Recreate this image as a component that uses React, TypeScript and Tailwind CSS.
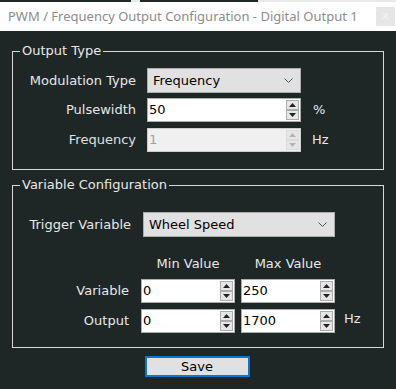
import React from "react";

const F = { fontFamily: '"DejaVu Sans", "Liberation Sans", sans-serif' };

function Chevron() {
  return (
    <svg width="9" height="6" viewBox="0 0 9 6" className="shrink-0">
      <path d="M0.5 0.5 L4.5 4.5 L8.5 0.5" fill="none" stroke="#555" strokeWidth="1" />
    </svg>
  );
}

function Combo({ value, w }: { value: string; w: string }) {
  return (
    <div
      className={`${w} h-[25px] bg-[#e1e1e1] border border-[#adadad] flex items-center justify-between pl-[5px] pr-[7px] text-[13px] text-black`}
    >
      <span>{value}</span>
      <Chevron />
    </div>
  );
}

function Spin({ disabled }: { disabled?: boolean }) {
  const c = disabled ? "#b5b5b5" : "#222";
  const bd = disabled ? "border-[#dcdcdc]" : "border-[#acacac]";
  return (
    <div className="flex flex-col w-[14px] h-full py-[1px] pr-[1px]">
      <div className={`flex-1 bg-[#e6e6e6] border ${bd} flex items-center justify-center`}>
        <svg width="7" height="4" viewBox="0 0 7 4"><path d="M0 4 L3.5 0 L7 4Z" fill={c} /></svg>
      </div>
      <div className={`flex-1 bg-[#e6e6e6] border ${bd} flex items-center justify-center`}>
        <svg width="7" height="4" viewBox="0 0 7 4"><path d="M0 0 L3.5 4 L7 0Z" fill={c} /></svg>
      </div>
    </div>
  );
}

function Num({ value, w, disabled }: { value: string; w: string; disabled?: boolean }) {
  return (
    <div
      className={`${w} h-[24px] border flex items-stretch justify-between ${
        disabled ? "bg-[#f0f0f0] border-[#cccccc] text-[#a0a0a0]" : "bg-white border-[#adadad] text-black"
      } text-[13px]`}
    >
      <span className="pl-[1px] leading-[22px]">{value}</span>
      <Spin disabled={disabled} />
    </div>
  );
}

export default function App() {
  return (
    <div className="w-[396px] h-[389px] bg-[#1e2626] flex flex-col" style={F}>
      <div className="h-[2px] flex">
        <div className="w-[131px] bg-[#1e2626]" />
        <div className="w-[9px] bg-[#e8e8e8]" />
        <div className="w-[118px] bg-[#1e2626]" />
        <div className="flex-1 bg-[#e8e8e8]" />
      </div>
      <div className="h-[29px] bg-white flex items-center justify-between pl-[8px] pr-[1px]">
        <span
          className="text-[#8c8c8c] text-[13px] whitespace-nowrap"
          style={{ fontFamily: '"Noto Sans", "Open Sans", sans-serif' }}
        >
          PWM / Frequency Output Configuration - Digital Output 1
        </span>
        <div className="w-[19px] h-[19px] bg-[#e6e6e6] flex items-center justify-center text-[11px] text-[#f8f8f8]">
          x
        </div>
      </div>

      <div className="px-[12px] pt-[12px] text-[#e8e8e8]">
        <fieldset className="border border-[#d8d8d8] h-[127px]">
          <legend className="ml-[7px] px-[2px] text-[13px] leading-[16px]">Output Type</legend>
          <div className="grid grid-cols-[123px_154px_auto] gap-x-[11px] items-center pt-[9px] text-[13px]">
            <span className="text-right">Modulation Type</span>
            <Combo value="Frequency" w="w-[154px]" />
            <span />
            <span className="text-right mt-[5px]">Pulsewidth</span>
            <div className="mt-[5px]"><Num value="50" w="w-[154px]" /></div>
            <span className="mt-[5px] pl-[1px]">%</span>
            <span className="text-right mt-[6px] text-[#e0e0e0]">Frequency</span>
            <div className="mt-[6px]"><Num value="1" w="w-[154px]" disabled /></div>
            <span className="mt-[6px]">Hz</span>
          </div>
        </fieldset>

        <fieldset className="border border-[#d8d8d8] h-[171px] mt-[7px]">
          <legend className="ml-[7px] px-[2px] text-[13px] leading-[16px]">Variable Configuration</legend>
          <div className="flex items-center gap-[12px] pt-[19px] text-[13px]">
            <span className="w-[118px] text-right">Trigger Variable</span>
            <Combo value="Wheel Speed" w="w-[192px]" />
          </div>
          <div className="grid grid-cols-[122px_94px_94px_auto] gap-x-[6px] items-center mt-[17px] text-[13px]">
            <span />
            <span className="text-center">Min Value</span>
            <span className="text-center">Max Value</span>
            <span />
            <span className="text-right mt-[5px] pr-[6px]">Variable</span>
            <div className="mt-[5px]"><Num value="0" w="w-[94px]" /></div>
            <div className="mt-[5px]"><Num value="250" w="w-[94px]" /></div>
            <span />
            <span className="text-right mt-[6px] pr-[6px]">Output</span>
            <div className="mt-[6px]"><Num value="0" w="w-[94px]" /></div>
            <div className="mt-[6px]"><Num value="1700" w="w-[94px]" /></div>
            <span className="mt-[6px] self-start pl-[3px]">Hz</span>
          </div>
        </fieldset>

        <div className="flex justify-center mt-[8px] pr-[2px]">
          <button className="w-[105px] h-[21px] bg-[#e1e1e1] border-2 border-[#0078d7] text-black text-[13px] leading-[15px]">
            Save
          </button>
        </div>
      </div>
    </div>
  );
}
